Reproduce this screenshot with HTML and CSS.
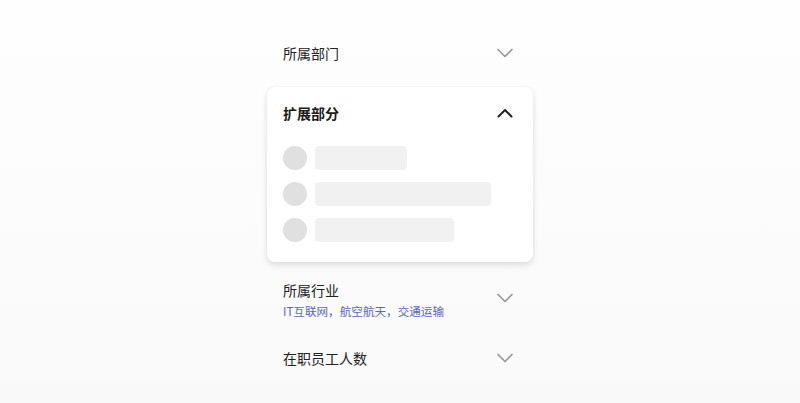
FILE: index.html
```html
<!DOCTYPE html>
<html lang="zh-CN">
<head>
<meta charset="utf-8">
<link rel="stylesheet" href="styles.css">
</head>
<body>
<div class="page">
  <div class="form">
    <div class="row row-single row-first">
      <div class="label">所属部门</div>
      <svg class="chev" viewBox="0 0 24 24"><path d="M5 8.5 L12 15.5 L19 8.5" /></svg>
    </div>

    <div class="card">
      <div class="card-head">
        <div class="card-title">扩展部分</div>
        <svg class="chev chev-up" viewBox="0 0 24 24"><path d="M5.5 15.5 L12 9 L18.5 15.5" /></svg>
      </div>
      <div class="skeleton">
        <div class="sk-row"><span class="sk-dot"></span><span class="sk-bar" style="width:92px"></span></div>
        <div class="sk-row"><span class="sk-dot"></span><span class="sk-bar" style="width:176px"></span></div>
        <div class="sk-row"><span class="sk-dot"></span><span class="sk-bar" style="width:139px"></span></div>
      </div>
    </div>

    <div class="row row-double">
      <div class="text-block">
        <div class="label">所属行业</div>
        <div class="sub">IT互联网，航空航天，交通运输</div>
      </div>
      <svg class="chev" viewBox="0 0 24 24"><path d="M5 8.5 L12 15.5 L19 8.5" /></svg>
    </div>

    <div class="row row-single">
      <div class="label">在职员工人数</div>
      <svg class="chev" viewBox="0 0 24 24"><path d="M5 8.5 L12 15.5 L19 8.5" /></svg>
    </div>
  </div>
</div>
</body>
</html>
```

FILE: styles.css
```css
html, body {
  margin: 0;
  padding: 0;
}
body {
  width: 800px;
  height: 403px;
  overflow: hidden;
  background: linear-gradient(180deg, #fefefe 0%, #fcfcfc 50%, #f9f9f9 100%);
  font-family: "Noto Sans CJK SC", "Noto Sans", sans-serif;
  color: #222;
}
.page {
  display: flex;
  justify-content: center;
  padding-top: 29px;
}
.form {
  width: 266px;
  display: flex;
  flex-direction: column;
}
.row {
  display: flex;
  align-items: center;
  justify-content: space-between;
  padding: 0 16px 0 16px;
}
.row-single {
  height: 48px;
}
.row-double {
  height: 72px;
  align-items: flex-start;
}
.row-double .text-block {
  padding-top: 18px;
}
.row-double .chev {
  align-self: center;
}
.label {
  font-size: 14px;
  line-height: 20px;
  color: #222;
}
.sub {
  font-size: 11.6px;
  line-height: 16px;
  margin-top: 3px;
  color: #5a66c0;
}
.chev {
  width: 24px;
  height: 24px;
  flex: none;
}
.chev path {
  fill: none;
  stroke: #999;
  stroke-width: 1.7;
  stroke-linecap: round;
  stroke-linejoin: round;
}
.chev-up path {
  stroke: #222;
  stroke-width: 2;
}
.card {
  margin-top: 10px;
  background: #fff;
  border-radius: 8px;
  box-shadow: 0 3px 6px rgba(0, 0, 0, 0.13), 0 0 2px rgba(0, 0, 0, 0.05);
  padding: 0 16px 20px 16px;
}
.card-head {
  height: 52px;
  display: flex;
  align-items: center;
  justify-content: space-between;
}
.card-title {
  font-size: 14px;
  line-height: 20px;
  font-weight: 700;
  color: #1a1a1a;
}
.skeleton {
  margin-top: 7px;
  display: flex;
  flex-direction: column;
  gap: 12px;
}
.sk-row {
  display: flex;
  align-items: center;
  gap: 8px;
  height: 24px;
}
.sk-dot {
  width: 24px;
  height: 24px;
  border-radius: 50%;
  background: #e0e0e0;
  flex: none;
}
.sk-bar {
  height: 24px;
  border-radius: 4px;
  background: #f1f1f1;
}
```
